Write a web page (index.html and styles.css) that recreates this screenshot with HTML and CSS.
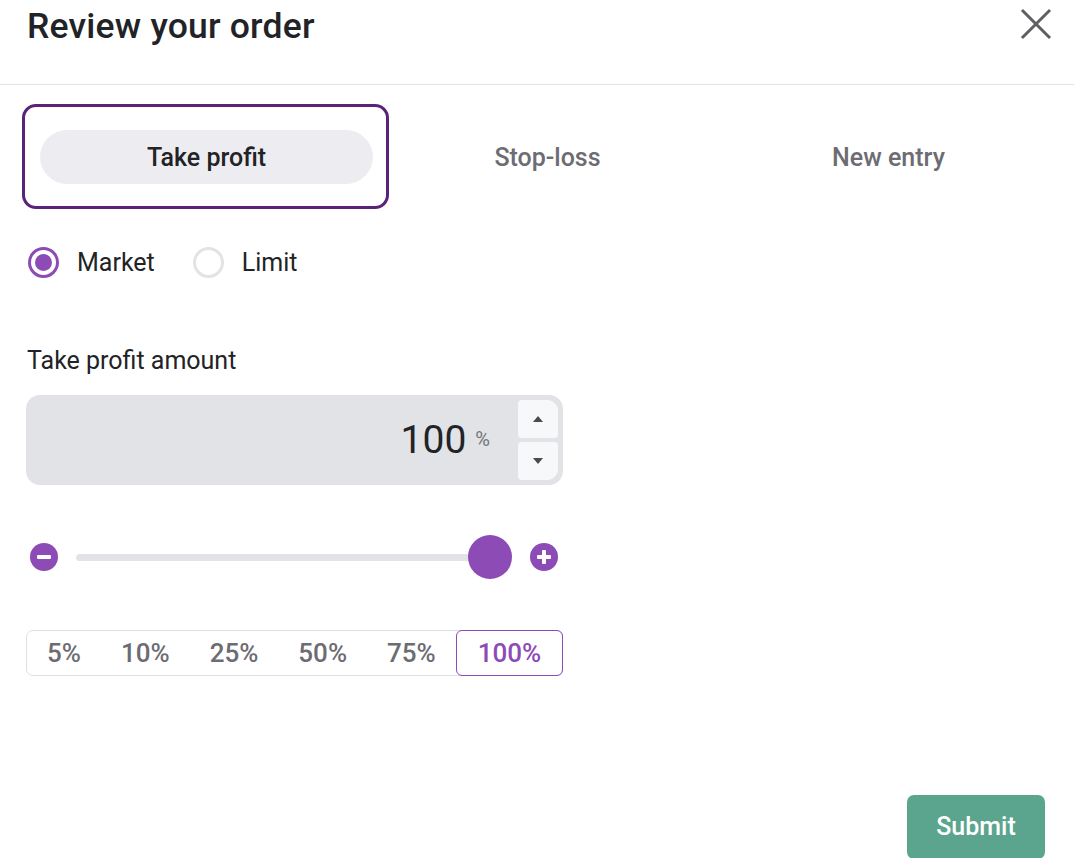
FILE: index.html
```html
<!DOCTYPE html>
<html>
<head>
<meta charset="utf-8">
<link rel="stylesheet" href="styles.css">
</head>
<body>
<div class="modal">
  <header class="header">
    <h1 class="title">Review your order</h1>
    <button class="close" aria-label="Close">
      <svg width="32" height="32" viewBox="0 0 32 32"><path d="M3 3 L29 29 M29 3 L3 29" stroke="#5f6062" stroke-width="3" stroke-linecap="square" fill="none"/></svg>
    </button>
  </header>
  <main class="content">
    <div class="tabs">
      <div class="tab active">Take profit</div>
      <div class="tab">Stop-loss</div>
      <div class="tab">New entry</div>
    </div>

    <div class="radios">
      <label class="radio"><span class="dot checked"></span>Market</label>
      <label class="radio"><span class="dot"></span>Limit</label>
    </div>

    <div class="field-label">Take profit amount</div>
    <div class="amount">
      <div class="amount-value"><span class="num">100</span><span class="unit">%</span></div>
      <div class="stepper">
        <div class="step up"><svg width="10" height="6" viewBox="0 0 10 6"><path d="M5 0 L10 6 L0 6 Z" fill="#4a4a4d"/></svg></div>
        <div class="step down"><svg width="10" height="6" viewBox="0 0 10 6"><path d="M0 0 L10 0 L5 6 Z" fill="#4a4a4d"/></svg></div>
      </div>
    </div>

    <div class="slider">
      <span class="round-btn"><span class="bar"></span></span>
      <div class="track"><div class="rail"></div><div class="thumb"></div></div>
      <span class="round-btn"><span class="bar"></span><span class="bar vert"></span></span>
    </div>

    <div class="presets">
      <div class="preset">5%</div>
      <div class="preset">10%</div>
      <div class="preset">25%</div>
      <div class="preset">50%</div>
      <div class="preset">75%</div>
      <div class="preset active">100%</div>
    </div>

    <div class="actions">
      <button class="submit">Submit</button>
    </div>
  </main>
</div>
</body>
</html>
```
FILE: styles.css
```css
* { box-sizing: border-box; }
html, body { margin: 0; padding: 0; }
body {
  width: 1074px;
  height: 858px;
  overflow: hidden;
  background: #fff;
  font-family: Roboto, "Liberation Sans", sans-serif;
  color: #222326;
}
.header {
  height: 85px;
  border-bottom: 1px solid #e3e3e5;
  display: flex;
  justify-content: space-between;
  align-items: flex-start;
  padding: 0 22px 0 27px;
}
.title {
  margin: 1px 0 0;
  font-size: 35.5px;
  line-height: 50px;
  font-weight: 500;
  letter-spacing: 0.2px;
}
.close {
  margin-top: 8px;
  border: 0;
  background: none;
  padding: 0;
  width: 32px;
  height: 32px;
}
.content {
  padding: 0 15px 0 27px;
}
.tabs {
  margin: 45px 0 0 9px;
  display: grid;
  grid-template-columns: repeat(3, 1fr);
}
.tab {
  position: relative;
  height: 54px;
  margin: 0 4px;
  border-radius: 27px;
  display: flex;
  align-items: center;
  justify-content: center;
  font-size: 25px;
  font-weight: 500;
  color: #6c6c72;
}
.tab.active {
  background: #ededf1;
  color: #222326;
}
.tab.active::after {
  content: "";
  position: absolute;
  top: -26px;
  bottom: -25px;
  left: -18px;
  right: -16px;
  border: 3px solid #5b2279;
  border-radius: 14px;
}
.radios {
  margin-top: 63px;
  display: flex;
  align-items: center;
  gap: 37px;
}
.radio {
  display: flex;
  align-items: center;
  gap: 18px;
  font-size: 25px;
  line-height: 31px;
  color: #222326;
}
.dot {
  width: 31px;
  height: 31px;
  border-radius: 50%;
  border: 3px solid #e2e3e6;
  margin-left: 1px;
  display: flex;
  align-items: center;
  justify-content: center;
}
.dot.checked { border-color: #8d4bb6; }
.dot.checked::before {
  content: "";
  width: 17px;
  height: 17px;
  border-radius: 50%;
  background: #8d4bb6;
}
.field-label {
  margin-top: 69px;
  font-size: 25px;
  line-height: 28px;
}
.amount {
  margin-top: 20px;
  width: 537px;
  height: 90px;
  margin-left: -1px;
  background: #e1e3e7;
  border-radius: 14px;
  display: flex;
  align-items: stretch;
  padding: 5px 5px 5px 0;
}
.amount-value {
  flex: 1;
  display: flex;
  align-items: center;
  justify-content: flex-end;
  padding-right: 28px;
}
.num {
  font-size: 39px;
  color: #222326;
}
.unit {
  font-size: 20px;
  color: #75757a;
  margin-left: 9px;
  margin-bottom: 2px;
}
.stepper {
  width: 40px;
  display: flex;
  flex-direction: column;
  gap: 4px;
}
.step {
  flex: 1;
  background: #f7f8fa;
  display: flex;
  align-items: center;
  justify-content: center;
  border-radius: 4px;
}
.step.up { border-top-right-radius: 11px; }
.step.down { border-bottom-right-radius: 11px; }
.slider {
  margin-top: 50px;
  width: 528px;
  margin-left: 3px;
  height: 44px;
  display: flex;
  align-items: center;
  gap: 18px;
}
.round-btn {
  position: relative;
  width: 28px;
  height: 28px;
  border-radius: 50%;
  background: #8d4bb6;
  flex: none;
  display: flex;
  align-items: center;
  justify-content: center;
}
.bar {
  width: 14px;
  height: 4px;
  border-radius: 1px;
  background: #fff;
}
.bar.vert {
  position: absolute;
  width: 4px;
  height: 14px;
}
.track {
  position: relative;
  flex: 1;
  height: 44px;
  display: flex;
  align-items: center;
}
.rail {
  width: calc(100% - 22px);
  height: 7px;
  border-radius: 4px;
  background: #e1e3e7;
}
.thumb {
  position: absolute;
  right: 0;
  top: 0;
  width: 44px;
  height: 44px;
  border-radius: 50%;
  background: #8d4bb6;
}
.presets {
  margin-top: 51px;
  margin-left: -1px;
  width: 537px;
  height: 46px;
  border: 1px solid #dfdfe2;
  border-radius: 7px;
  display: flex;
}
.preset {
  padding: 0 20px;
  font-size: 26px;
  font-weight: 500;
  line-height: 44px;
  color: #6c6c72;
  white-space: nowrap;
}
.preset.active {
  flex: 1;
  text-align: center;
  margin: -1px -1px -1px 0;
  border: 1px solid #8d4bb6;
  border-radius: 6px;
  color: #8d4bb6;
}
.actions {
  margin-top: 119px;
  display: flex;
  justify-content: flex-end;
  padding-right: 14px;
}
.submit {
  width: 138px;
  height: 64px;
  border: 0;
  border-radius: 7px;
  background: #5ba58e;
  color: #fff;
  font-family: Roboto, "Liberation Sans", sans-serif;
  font-size: 25px;
  font-weight: 500;
  padding: 0 0 2px;
}
```
